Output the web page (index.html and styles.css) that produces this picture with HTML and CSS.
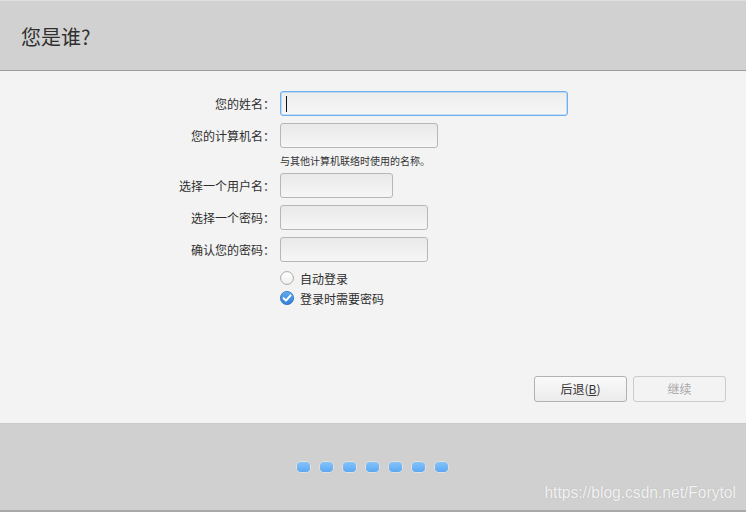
FILE: index.html
```html
<!DOCTYPE html>
<html lang="zh-CN">
<head>
<meta charset="utf-8">
<title>您是谁？</title>
<link rel="stylesheet" href="styles.css">
</head>
<body>
<div class="app">
  <header class="header">
    <h1 class="title">您是谁?</h1>
  </header>
  <main class="main">
    <div class="form">
      <label class="label">您的姓名：</label>
      <div class="field"><div class="input focus w288"><span class="caret"></span></div></div>

      <label class="label">您的计算机名：</label>
      <div class="field"><div class="input w158"></div></div>

      <div class="hint">与其他计算机联络时使用的名称。</div>

      <label class="label">选择一个用户名：</label>
      <div class="field"><div class="input w113"></div></div>

      <label class="label">选择一个密码：</label>
      <div class="field"><div class="input w148"></div></div>

      <label class="label">确认您的密码：</label>
      <div class="field"><div class="input w148"></div></div>

      <div class="options">
        <div class="option">
          <svg class="mark" width="14" height="14" viewBox="0 0 14 14">
            <defs>
              <linearGradient id="rg" x1="0" y1="0" x2="0" y2="1">
                <stop offset="0" stop-color="#ffffff"/>
                <stop offset="1" stop-color="#f0f0f0"/>
              </linearGradient>
            </defs>
            <circle cx="7" cy="7" r="6.4" fill="url(#rg)" stroke="#a9a9a9" stroke-width="1"/>
          </svg>
          <span>自动登录</span>
        </div>
        <div class="option">
          <svg class="mark" width="14" height="14" viewBox="0 0 14 14">
            <defs>
              <linearGradient id="cg" x1="0" y1="0" x2="0" y2="1">
                <stop offset="0" stop-color="#66acef"/>
                <stop offset="1" stop-color="#2f7fd6"/>
              </linearGradient>
            </defs>
            <circle cx="7" cy="7" r="6.6" fill="url(#cg)" stroke="#2b72c2" stroke-width="0.8"/>
            <path d="M3.6 7.2 L6 9.6 L10.6 4.4" fill="none" stroke="#ffffff" stroke-width="2" stroke-linecap="round" stroke-linejoin="round"/>
          </svg>
          <span>登录时需要密码</span>
        </div>
      </div>
    </div>

    <div class="actions">
      <button class="btn">后退(<u>B</u>)</button>
      <button class="btn disabled">继续</button>
    </div>
  </main>
  <footer class="footer">
    <div class="dots">
      <span class="dot"></span>
      <span class="dot"></span>
      <span class="dot"></span>
      <span class="dot"></span>
      <span class="dot"></span>
      <span class="dot"></span>
      <span class="dot"></span>
    </div>
    <div class="watermark">https://blog.csdn.net/Forytol</div>
  </footer>
</div>
</body>
</html>
```

FILE: styles.css
```css
* {
  box-sizing: border-box;
}

html, body {
  margin: 0;
  padding: 0;
  width: 746px;
  height: 512px;
  overflow: hidden;
  background: #f3f3f3;
  font-family: "Noto Sans CJK SC", "Noto Sans", "Liberation Sans", sans-serif;
  color: #333333;
}

.app {
  display: flex;
  flex-direction: column;
  height: 512px;
}

.header {
  height: 71px;
  flex: none;
  background: #d1d1d1;
  border-top: 1px solid #dfdfdf;
  border-bottom: 1px solid #9d9d9d;
  display: flex;
  align-items: center;
  padding-left: 21px;
  padding-top: 2px;
}

.title {
  margin: 0;
  font-size: 20px;
  font-weight: normal;
  color: #2f2f2f;
  line-height: 24px;
}

.main {
  flex: 1;
  display: flex;
  flex-direction: column;
  justify-content: space-between;
  background: #f3f3f3;
}

.form {
  display: grid;
  grid-template-columns: 275px auto;
  column-gap: 5px;
  row-gap: 7px;
  padding-top: 20px;
  align-items: center;
}

.label {
  grid-column: 1;
  text-align: right;
  font-size: 12px;
  line-height: 16px;
  color: #2e2e2e;
}

.field {
  grid-column: 2;
  display: flex;
}

.input {
  height: 25px;
  border: 1px solid #b7b7b7;
  border-radius: 3px;
  background: linear-gradient(#e9e9e9, #f6f6f6);
  display: flex;
  align-items: center;
  padding-left: 5px;
}

.input.focus {
  border-color: #6cb0ee;
  box-shadow: inset 0 0 0 1px rgba(130, 190, 245, 0.45);
  background: linear-gradient(#ececec, #f7f7f7);
}

.caret {
  width: 1px;
  height: 16px;
  background: #111111;
}

.w288 { width: 288px; }
.w158 { width: 158px; }
.w113 { width: 113px; }
.w148 { width: 148px; }

.hint {
  grid-column: 2;
  font-size: 10px;
  line-height: 11px;
  color: #333333;
}

.options {
  grid-column: 2;
  display: flex;
  flex-direction: column;
  margin-top: -1px;
}

.option {
  display: flex;
  align-items: center;
  height: 20px;
  gap: 6px;
  font-size: 12px;
  color: #2e2e2e;
}

.mark {
  display: block;
  flex: none;
}

.actions {
  display: flex;
  justify-content: flex-end;
  gap: 6px;
  padding-right: 20px;
  padding-bottom: 21px;
}

.btn {
  width: 93px;
  height: 26px;
  border: 1px solid #b2b2b2;
  border-radius: 3px;
  background: linear-gradient(#fafafa, #ebebeb);
  font-family: "Noto Sans CJK SC", "Noto Sans", "Liberation Sans", sans-serif;
  font-size: 12px;
  color: #333333;
  padding: 0;
  line-height: 24px;
}

.btn u {
  text-decoration: underline;
}

.btn.disabled {
  border-color: #cbcbcb;
  background: #f3f3f3;
  color: #a8a8a8;
}

.footer {
  position: relative;
  height: 89px;
  flex: none;
  background: #d0d0d0;
  border-top: 1px solid #cacaca;
  border-bottom: 2px solid #a9a9a9;
  display: flex;
  align-items: center;
  justify-content: center;
}

.dots {
  display: flex;
  gap: 10px;
  margin-left: -2px;
}

.dot {
  width: 13px;
  height: 10px;
  border-radius: 4px;
  background: linear-gradient(#86c3fb, #5ba8f2);
  box-shadow: 0 0 0 0.5px rgba(255, 255, 255, 0.7);
}

.watermark {
  position: absolute;
  right: 10px;
  bottom: 8px;
  font-family: "Liberation Sans", Arial, sans-serif;
  font-size: 15.6px;
  color: rgba(255, 255, 255, 0.85);
  text-shadow: 0 0 1px rgba(150, 150, 150, 0.6);
}
```
